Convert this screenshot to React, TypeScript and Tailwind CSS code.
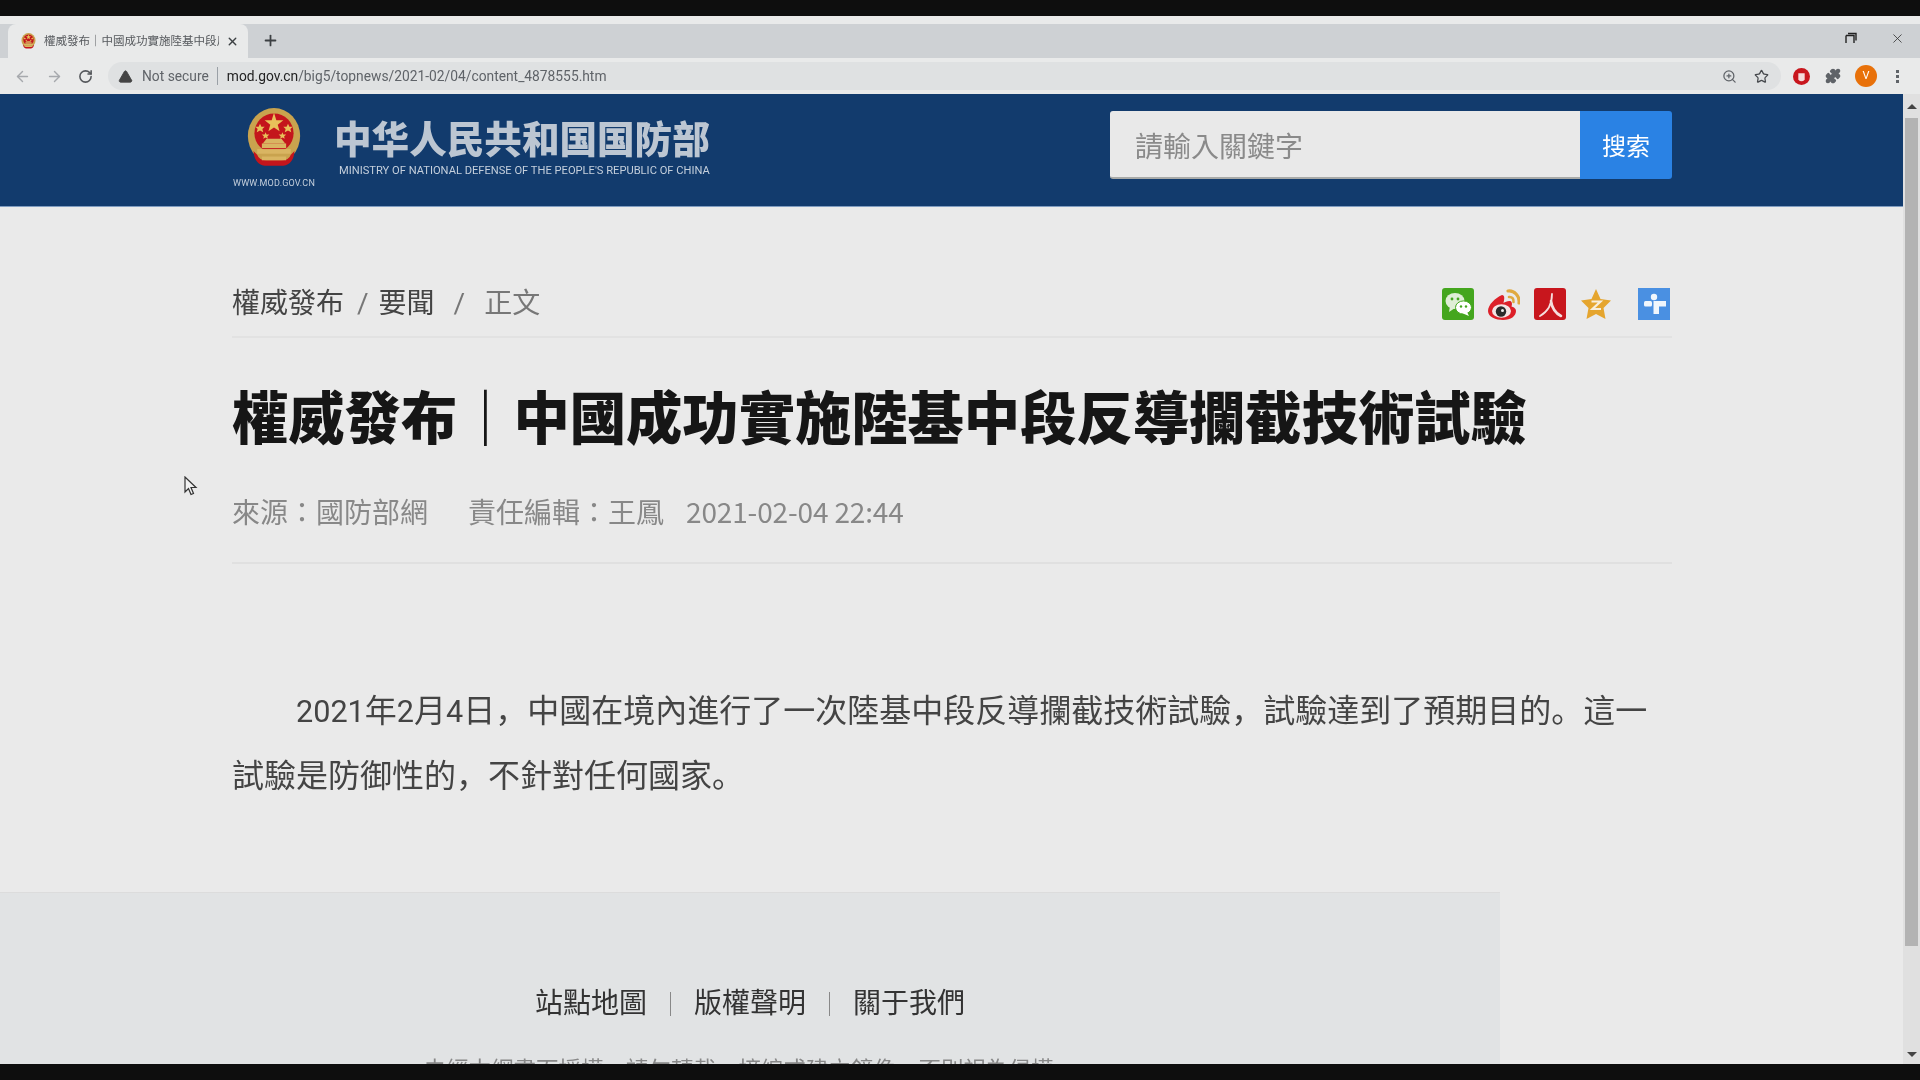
import { ArrowLeft, ArrowRight, RotateCw, Plus, X, TriangleAlert, ZoomIn, Star, Puzzle } from "lucide-react";

function Emblem({ size }: { size: number }) {
  return (
    <svg width={size} height={size * 1.1} viewBox="0 0 60 66" className="block">
      <ellipse cx="30" cy="30" rx="28" ry="30" fill="#c9a34e" />
      <circle cx="30" cy="27" r="21" fill="#c4151c" />
      <polygon points="30,5 32.5,13 40,13 34,18 36,25 30,21 24,25 26,18 20,13 27.5,13" fill="#e8c15a" />
      <polygon points="15,17 16.5,20 20,20 17.5,22.5 18.5,26 15,24 11.5,26 12.5,22.5 10,20 13.5,20" fill="#e8c15a" />
      <polygon points="45,17 46.5,20 50,20 47.5,22.5 48.5,26 45,24 41.5,26 42.5,22.5 40,20 43.5,20" fill="#e8c15a" />
      <polygon points="21,26 22,28.5 25,28.5 22.8,30.5 23.5,33 21,31.5 18.5,33 19.2,30.5 17,28.5 20,28.5" fill="#e8c15a" />
      <polygon points="39,26 40,28.5 43,28.5 40.8,30.5 41.5,33 39,31.5 36.5,33 37.2,30.5 35,28.5 38,28.5" fill="#e8c15a" />
      <rect x="17" y="38" width="26" height="5" fill="#d9b562" />
      <polygon points="22,33 38,33 42,38 18,38" fill="#d9b562" />
      <rect x="12" y="44" width="36" height="5" fill="#d9b562" />
      <path d="M8 46 Q9 60 20 62 L40 62 Q51 60 52 46 L48 50 Q46 56 38 56 L22 56 Q14 56 12 50 Z" fill="#c4151c" />
      <rect x="17" y="52" width="26" height="4" fill="#d9b562" />
    </svg>
  );
}

function ShareIcons() {
  return (
    <div className="flex items-center mr-[2px] mt-[2px]">
      <svg width="32" height="32" viewBox="0 0 32 32" className="block">
        <rect width="32" height="32" rx="3" fill="#44a61e" />
        <ellipse cx="13" cy="13" rx="9.5" ry="8" fill="#dfeed6" />
        <polygon points="8,18 7,24 13,20" fill="#dfeed6" />
        <ellipse cx="21.5" cy="19.5" rx="8" ry="6.6" fill="#fff" stroke="#44a61e" />
        <polygon points="25,24 27,28 21,25.5" fill="#fff" />
        <circle cx="10" cy="11" r="1.4" fill="#44a61e" />
        <circle cx="16" cy="11" r="1.4" fill="#44a61e" />
        <circle cx="19" cy="18.5" r="1.2" fill="#44a61e" />
        <circle cx="24" cy="18.5" r="1.2" fill="#44a61e" />
      </svg>
      <svg width="32" height="32" viewBox="0 0 32 32" className="block ml-[14px]">
        <path d="M14 7 C7 10 0 17 0 23 C0 29 8 32 15 32 C23 32 28 28 28 23 C28 20 25 19 23.5 18.5 C24.5 15.5 24 13 21.5 13 C19 13 17 14 15.5 15 C16.5 11 17 7 14 7 Z" fill="#dd2029" />
        <ellipse cx="13.5" cy="23" rx="9.5" ry="6.8" fill="#f4e4e4" />
        <circle cx="13" cy="23.5" r="5.2" fill="#2b2b2b" />
        <circle cx="14.5" cy="22.5" r="1.5" fill="#eee" />
        <path d="M20 3 C26 2 32 8 31 15" fill="none" stroke="#e0a93f" strokeWidth="3.2" strokeLinecap="round" />
        <path d="M21 9 C24 8.5 26 11 25.5 14" fill="none" stroke="#e0a93f" strokeWidth="2.6" strokeLinecap="round" />
      </svg>
      <svg width="32" height="32" viewBox="0 0 32 32" className="block ml-[14px]">
        <rect width="32" height="32" rx="3" fill="#c8161d" />
        <path d="M18 6 C18 15 15 23 6 28" fill="none" stroke="#f5dede" strokeWidth="1.8" strokeLinecap="round" />
        <path d="M17 13 C18 20 21 25 27 28" fill="none" stroke="#f5dede" strokeWidth="2.6" strokeLinecap="round" />
      </svg>
      <svg width="32" height="32" viewBox="0 0 32 32" className="block ml-[14px]">
        <polygon points="16,1 20.5,11 31,12.5 23.5,20 25.5,31 16,26 6.5,31 8.5,20 1,12.5 11.5,11" fill="#e5a52e" />
        <path d="M11.5 13.5 H20.5 L12.5 21 H21" fill="none" stroke="#f8eedb" strokeWidth="2.2" />
      </svg>
      <svg width="32" height="32" viewBox="0 0 32 32" className="block ml-[26px]">
        <rect width="32" height="32" fill="#4a90e2" />
        <circle cx="16" cy="9" r="3.2" fill="#f0f6fc" />
        <rect x="6" y="13" width="8" height="5.5" rx="1.5" fill="#f0f6fc" />
        <path d="M15.5 13 H28 V18.5 H21 V26 H15.5 Z" fill="#f0f6fc" />
      </svg>
    </div>
  );
}

export default function App() {
  return (
    <div className="relative w-[1920px] h-[1080px] overflow-hidden bg-[#0e0e0e] flex flex-col blur-[0.4px] font-['Roboto','Noto_Sans_CJK_SC',sans-serif]">
      <div className="h-4 shrink-0"></div>

      {/* browser chrome */}
      <div className="h-[42px] shrink-0 bg-[#ced1d4] border-t-[8px] border-[#e9eaea] flex items-stretch">
        <div className="ml-2 w-[240px] bg-[#e9eaea] rounded-t-lg flex items-center pl-[13px] pr-[9px]">
          <Emblem size={15} />
          <span className="ml-[8px] mt-[1px] w-[175px] overflow-hidden whitespace-nowrap text-[11.5px] text-[#55585c]">權威發布｜中國成功實施陸基中段反導攔截技術試驗</span>
          <span className="flex-1"></span>
          <X size={13} strokeWidth={2.5} className="text-[#3c4043] mt-[1px]" />
        </div>
        <Plus size={17} strokeWidth={2.5} className="ml-[14px] mt-[8px] text-[#3c4043]" />
        <div className="flex-1"></div>
        <div className="flex items-start pt-[7px] pr-[15px] gap-[33px]">
          <svg width="12" height="12" viewBox="0 0 12 12" className="mt-[1px]">
            <path d="M3 1.5 H11 V8.5 M1 3.5 H9 V11 M1 3.5 V11" fill="none" stroke="#222" strokeWidth="1.4" />
          </svg>
          <X size={15} strokeWidth={1.3} className="text-[#333]" />
        </div>
      </div>
      <div className="h-9 shrink-0 bg-[#e9eaea] flex items-center pl-[14px] pr-[15px]">
        <ArrowLeft size={17} className="text-[#a6a9ad]" />
        <ArrowRight size={17} className="ml-[15px] text-[#a6a9ad]" />
        <RotateCw size={15} strokeWidth={2.5} className="ml-[15px] text-[#55585c]" />
        <div className="ml-[15px] h-7 w-[1673px] bg-[#dfe1e2] rounded-full flex items-center pl-[10px] pr-[12px]">
          <TriangleAlert size={15} fill="#444" strokeWidth={1.5} className="text-[#444]" />
          <span className="ml-[9px] text-[13.8px] text-[#5f6368]">Not secure</span>
          <span className="ml-[8px] h-[18px] w-px bg-[#9aa0a6]"></span>
          <span className="ml-[9px] text-[13.8px] text-[#5f6368]"><span className="text-[#222]">mod.gov.cn</span>/big5/topnews/2021-02/04/content_4878555.htm</span>
          <span className="flex-1"></span>
          <ZoomIn size={15} className="text-[#5f6368]" />
          <Star size={15} strokeWidth={2} className="ml-[17px] text-[#45484c]" />
        </div>
        <svg width="17" height="17" viewBox="0 0 16 16" className="ml-[12px]">
          <circle cx="8" cy="8" r="8" fill="#c8161d" />
          <path d="M5 6 V11 Q8 14 11 11 V5 H5" fill="#f4dada" />
        </svg>
        <Puzzle size={16} fill="#5f6368" className="ml-[15px] text-[#5f6368]" />
        <span className="ml-[14px] w-[22px] h-[22px] rounded-full bg-[#e8710a] text-white text-[11px] flex items-center justify-center">V</span>
        <span className="ml-[19px] w-[3px] h-[13px] border-y-[3px] border-[#5f6368] relative flex items-center"><span className="w-[3px] h-[3px] bg-[#5f6368]"></span></span>
      </div>

      <div className="flex-1 min-h-0 flex">
        <div className="flex-1 min-w-0 overflow-hidden bg-[#eaeaea]">
          {/* site header */}
          <header className="h-[113px] bg-[#123b6d] border-b border-[#7f9cc0] pl-[232px] pr-[231px] flex items-start justify-between">
            <div className="flex items-start pt-[14px]">
              <div className="w-[84px] flex flex-col items-center">
                <Emblem size={56} />
                <span className="mt-[9px] text-[9px] leading-none tracking-[0.2px] text-[#c4cfdc] whitespace-nowrap">WWW.MOD.GOV.CN</span>
              </div>
              <div className="ml-[18px] mt-[11px]">
                <div className="text-[37.6px] leading-[42px] font-black text-[#bcc6d2] whitespace-nowrap">中华人民共和国国防部</div>
                <div className="ml-[5px] mt-[3px] text-[11.15px] leading-[13px] text-[#c4cfdc] whitespace-nowrap">MINISTRY OF NATIONAL DEFENSE OF THE PEOPLE'S REPUBLIC OF CHINA</div>
              </div>
            </div>
            <div className="flex h-[68px] w-[562px] mt-[17px]">
              <div className="flex-1 bg-[#e9e9e9] rounded-l-[3px] pl-[25px] pt-[2px] flex items-center text-[28px] text-[#8a8a8a] font-['Noto_Sans_CJK_TC',sans-serif] border-b-2 border-[#a8aaa8]">請輸入關鍵字</div>
              <div className="w-[92px] bg-[#2a82e4] rounded-[3px] rounded-l-none pt-[3px] flex items-center justify-center text-[24px] text-white">搜索</div>
            </div>
          </header>

          {/* article */}
          <main className="pl-[232px] w-[1672px]">
            <div className="mt-[63px] h-[68px] border-b-2 border-[#e2e2e2] flex items-center justify-between">
              <div className="flex items-center pt-[2px] text-[28px] text-[#444]">
                <span>權威發布</span>
                <span className="ml-[13px] text-[#777]">/</span>
                <span className="ml-[10px]">要聞</span>
                <span className="ml-[19px] text-[#777]">/</span>
                <span className="ml-[19px] text-[#777]">正文</span>
              </div>
              <ShareIcons />
            </div>
            <h1 className="mt-[37px] text-[56.3px] leading-[80px] font-black text-[#161616] whitespace-nowrap font-['Noto_Sans_CJK_TC',sans-serif]">權威發布｜中國成功實施陸基中段反導攔截技術試驗</h1>
            <div className="mt-[32px] pb-[27px] border-b-2 border-[#e0e0e0] flex items-center text-[28px] leading-[48px] text-[#888] font-['Noto_Sans_CJK_TC',sans-serif]">
              <span>來源：國防部網</span>
              <span className="ml-[40px]">責任編輯：王鳳</span>
              <span className="ml-[22px] tracking-[-0.15px]">2021-02-04 22:44</span>
            </div>
            <p className="mt-[115px] text-[32px] leading-[64px] text-[#444] indent-[64px]">
              <span className="text-[30.6px]">2021</span>年<span className="text-[30.6px]">2</span>月<span className="text-[30.6px]">4</span>日，中國在境內進行了一次陸基中段反導攔截技術試驗，試驗達到了預期目的。這一
              <br />
              試驗是防御性的，不針對任何國家。
            </p>
          </main>

          {/* footer stops at 1500px, the page overflows past it */}
          <footer className="mt-[84px] w-[1500px] bg-[#e1e3e4] border-t border-[#dcdcdc] pt-[91px] flex flex-col items-center">
            <div className="flex items-center text-[28px] leading-[40px] text-[#333]">
              <span>站點地圖</span>
              <span className="mx-[23px] h-6 w-px bg-[#888]"></span>
              <span>版權聲明</span>
              <span className="mx-[23px] h-6 w-px bg-[#888]"></span>
              <span>關于我們</span>
            </div>
            <div className="mt-[28px] mr-[23px] text-[22.5px] leading-[36px] text-[#888] whitespace-nowrap">未經本網書面授權，請勿轉載、摘編或建立鏡像，否則視為侵權</div>
          </footer>
        </div>

        {/* scrollbar */}
        <div className="w-[17px] shrink-0 bg-[#e0e0e0] flex flex-col items-center">
          <div className="h-6 flex items-center justify-center">
            <span className="w-0 h-0 border-x-[5px] border-b-[5px] border-x-transparent border-b-[#444]"></span>
          </div>
          <div className="w-[13px] h-[828px] bg-[#b3b3b3]"></div>
          <div className="flex-1"></div>
          <div className="h-5 flex items-center justify-center">
            <span className="w-0 h-0 border-x-[5px] border-t-[5px] border-x-transparent border-t-[#444]"></span>
          </div>
        </div>
      </div>

      <div className="h-4 shrink-0 bg-[#0e0e0e]"></div>

      {/* mouse pointer in the capture */}
      <svg width="14" height="20" viewBox="0 0 14 20" className="absolute left-[184px] top-[476px]">
        <path d="M1 1 V16 L4.5 12.5 L7 18.5 L9.5 17.5 L7 11.5 H12 Z" fill="#f2f2f2" stroke="#333" strokeWidth="1.2" />
      </svg>
    </div>
  );
}
